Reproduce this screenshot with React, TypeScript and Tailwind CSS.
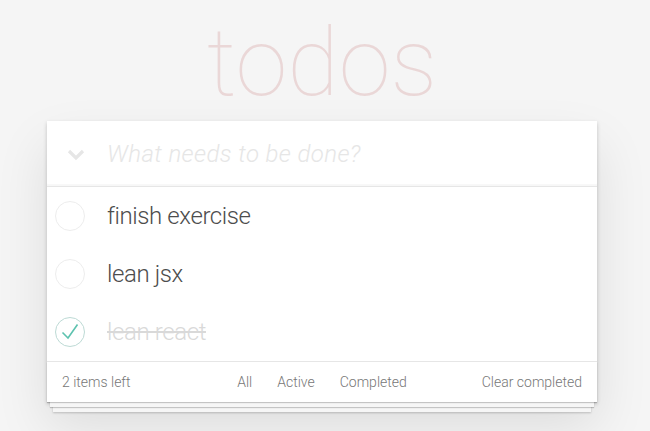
import React from 'react'

type Todo = { title: string; done: boolean }

const todos: Todo[] = [
  { title: 'finish exercise', done: false },
  { title: 'lean jsx', done: false },
  { title: 'lean react', done: true },
]

function Toggle({ done }: { done: boolean }) {
  return (
    <svg width="40" height="40" viewBox="0 0 40 40" className="shrink-0">
      <circle cx="20" cy="20" r="14.5" fill="none" stroke={done ? '#bddad5' : '#ededed'} strokeWidth="1" />
      {done && <path d="M12.5 20.5 L18 26 L27.5 12.5" fill="none" stroke="#5dc2af" strokeWidth="1.6" />}
    </svg>
  )
}

export default function App() {
  return (
    <div className="min-h-screen bg-[#f5f5f5] font-['Roboto',_sans-serif] font-light text-[#4d4d4d] overflow-hidden">
      <div className="w-[550px] ml-[47px]">
        <h1 className="h-[121px] pt-[16px] text-center text-[94px] leading-none font-thin text-[rgba(175,47,47,0.15)]">
          todos
        </h1>

        <section className="relative isolate bg-white shadow-[0_2px_4px_0_rgba(0,0,0,0.2),0_25px_50px_0_rgba(0,0,0,0.1)]">
          <header className="flex h-[65px] items-center shadow-[inset_0_-2px_1px_rgba(0,0,0,0.03)]">
            <div className="flex w-[60px] justify-center pr-[3px] pt-[2px]">
              <svg width="18" height="12" viewBox="0 0 18 12">
                <path d="M2 2 L9 9 L16 2" fill="none" stroke="#e6e6e6" strokeWidth="3.2" />
              </svg>
            </div>
            <span className="text-[24px] italic tracking-[0.4px] text-[#e6e6e6]">What needs to be done?</span>
          </header>

          <ul className="border-t border-[#e6e6e6]">
            {todos.map((t) => (
              <li key={t.title} className="flex h-[58px] items-center">
                <div className="flex w-[60px] pl-[3px]">
                  <Toggle done={t.done} />
                </div>
                <span
                  className={
                    t.done
                      ? 'text-[24px] tracking-[-0.4px] text-[#d9d9d9] line-through'
                      : 'text-[24px] tracking-[-0.4px] text-[#4d4d4d]'
                  }
                >
                  {t.title}
                </span>
              </li>
            ))}
          </ul>

          <footer className="relative grid h-[41px] grid-cols-[1fr_auto_1fr] items-center border-t border-[#e6e6e6] px-[15px] text-[14px] text-[#777]">
            <span>2 items left</span>
            <div className="flex gap-[25px]">
              <span>All</span>
              <span>Active</span>
              <span>Completed</span>
            </div>
            <span className="text-right">Clear completed</span>
            <div className="absolute left-0 right-0 bottom-0 -z-10 h-[40px] shadow-[0_1px_1px_rgba(0,0,0,0.2),0_8px_0_-3px_#f6f6f6,0_9px_1px_-3px_rgba(0,0,0,0.2),0_16px_0_-6px_#f6f6f6,0_17px_2px_-6px_rgba(0,0,0,0.2)]" />
          </footer>
        </section>
      </div>
    </div>
  )
}
